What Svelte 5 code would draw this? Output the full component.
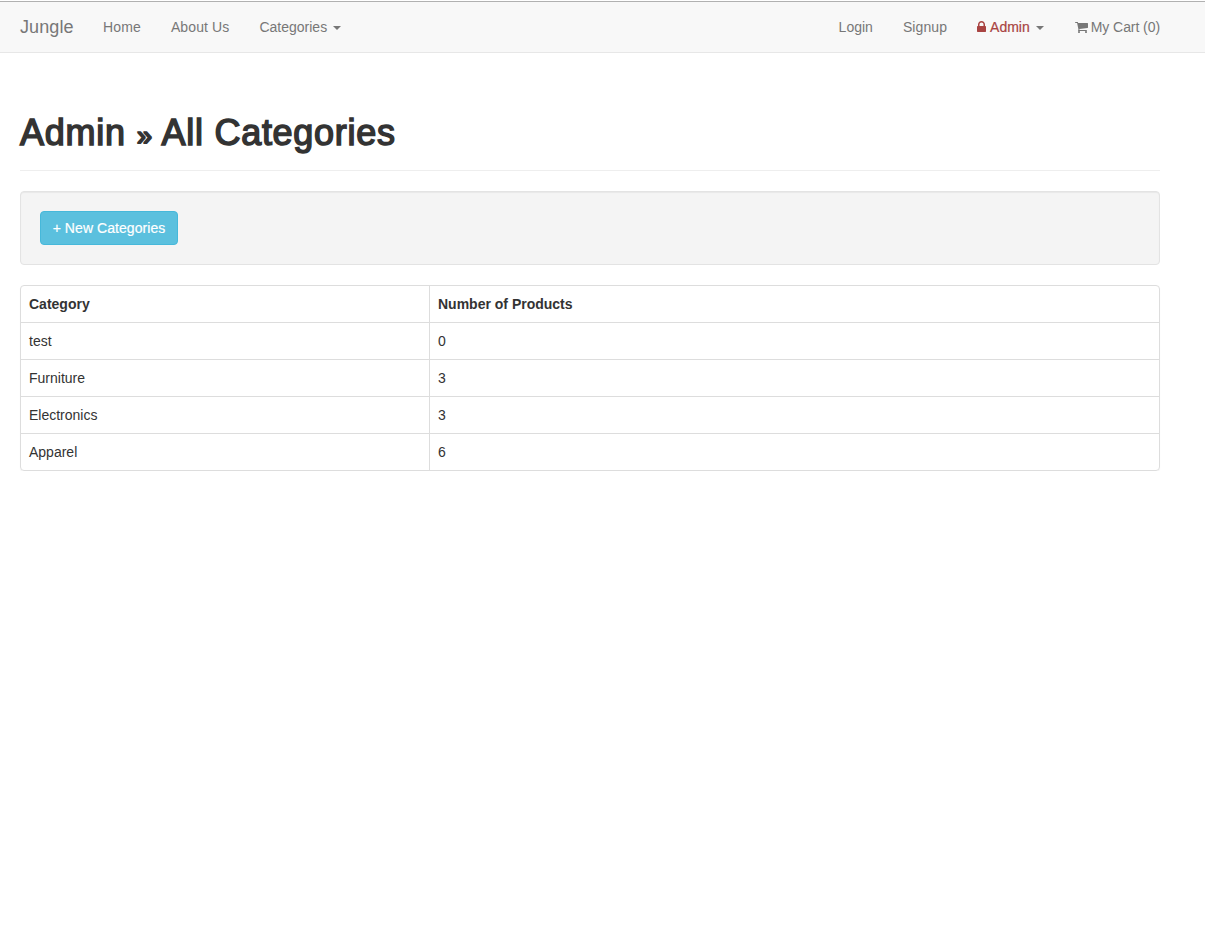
<script>
  const categories = [
    { name: 'test', count: 0 },
    { name: 'Furniture', count: 3 },
    { name: 'Electronics', count: 3 },
    { name: 'Apparel', count: 6 }
  ];
</script>

<nav>
  <div class="group">
    <a class="brand" href="#home">Jungle</a>
    <a class="home" href="#home">Home</a>
    <a class="about" href="#about">About Us</a>
    <a class="cats" href="#categories">Categories <span class="caret"></span></a>
  </div>
  <div class="group">
    <a class="login" href="#login">Login</a>
    <a class="signup" href="#signup">Signup</a>
    <a class="adminlink" href="#admin"><span class="danger"><svg class="lock" viewBox="0 0 1152 1792"><path fill="currentColor" d="M320 768h512v-192q0-106-75-181t-181-75-181 75-75 181v192zm832 96v576q0 40-28 68t-68 28h-960q-40 0-68-28t-28-68v-576q0-40 28-68t68-28h32v-192q0-184 132-316t316-132 316 132 132 316v192h32q40 0 68 28t28 68z" /></svg><span>Admin</span></span><span class="caret"></span></a>
    <a class="cart" href="#cart"><svg class="cart-icon" viewBox="64 0 1664 1792"><path fill="currentColor" d="M704 1536q0 52-38 90t-90 38-90-38-38-90 38-90 90-38 90 38 38 90zm896 0q0 52-38 90t-90 38-90-38-38-90 38-90 90-38 90 38 38 90zm128-1088v512q0 24-16.5 42.5t-40.5 21.5l-1044 122q13 60 13 70 0 16-24 64h920q26 0 45 19t19 45-19 45-45 19h-1024q-26 0-45-19t-19-45q0-11 8-31.500t16-36 21.500-40 15.500-29.500l-177-823h-204q-26 0-45-19t-19-45 19-45 45-19h256q16 0 28.500 6.500t19.500 15.500 13 24.500 8 26 5.500 29.500 4.500 26h1201q26 0 45 19t19 45z" /></svg><span>My Cart (0)</span></a>
  </div>
</nav>

<main>
  <header><h1>Admin <span class="sep">»</span> All Categories</h1></header>
  <div class="well"><a class="btn" href="#new">+ New Categories</a></div>
  <div class="panel">
    <table>
      <thead>
        <tr><th class="first">Category</th><th>Number of Products</th></tr>
      </thead>
      <tbody>
        {#each categories as c}
          <tr><td>{c.name}</td><td>{c.count}</td></tr>
        {/each}
      </tbody>
    </table>
  </div>
</main>

<style>
  :global(body) {
    margin: 0;
    background: #fff;
    color: #333;
    font: 14px/20px "Liberation Sans", Arial, sans-serif;
  }
  a { text-decoration: none; }
  nav {
    box-sizing: border-box;
    height: 52px;
    margin-top: 1px;
    padding: 0 45px 0 20px;
    display: flex;
    justify-content: space-between;
    background: #f8f8f8;
    border-top: 1px solid #b1b1b1;
    border-bottom: 1px solid #e7e7e7;
  }
  .group { display: flex; gap: 30px; }
  nav a {
    display: flex;
    align-items: center;
    height: 20px;
    padding: 15px 0;
    color: #777;
    white-space: nowrap;
  }
  .brand { font-size: 18px; letter-spacing: 0.1px; margin-right: -0.6px; }
  .home, .about { letter-spacing: 0.12px; }
  .signup { letter-spacing: 0.1px; }
  .adminlink { margin-right: 1px; }
  .caret {
    margin-left: 6px;
    border-top: 4px solid #777;
    border-left: 4px solid transparent;
    border-right: 4px solid transparent;
    position: relative;
    top: 1px;
  }
  .danger { display: flex; align-items: center; color: #a94442; }
  .danger span { -webkit-text-stroke: 0.2px #a94442; }
  svg { height: 14px; display: block; }
  .lock { width: 9px; margin-right: 4px; }
  .cart-icon { width: 13px; margin-right: 3px; }
  .cart span { letter-spacing: -0.07px; }
  main { padding: 58px 45px 0 20px; }
  header {
    border-bottom: 1px solid #eee;
    padding-bottom: 16px;
    margin-bottom: 20px;
  }
  h1 {
    margin: 0;
    font-size: 36px;
    line-height: 43px;
    height: 43px;
    font-weight: 400;
    letter-spacing: 0.72px;
    -webkit-text-stroke: 1.5px #333;
  }
  .sep { font-size: 27px; letter-spacing: 0; margin: 0 0.9px 0 0.5px; -webkit-text-stroke-width: 1.8px; }
  .well {
    box-sizing: border-box;
    height: 74px;
    padding: 19px;
    margin-bottom: 20px;
    background: #f4f4f4;
    border: 1px solid #e3e3e3;
    border-radius: 4px;
    box-shadow: inset 0 1px 1px rgba(0, 0, 0, 0.05);
  }
  .btn {
    box-sizing: border-box;
    display: flex;
    justify-content: center;
    width: 138px;
    height: 34px;
    padding: 6px 0;
    color: #fff;
    background: #5bc0de;
    border: 1px solid #46b8da;
    border-radius: 4px;
    white-space: nowrap;
    letter-spacing: 0.06px;
    -webkit-text-stroke: 0.2px #fff;
  }
  .panel {
    border: 1px solid #ddd;
    border-radius: 4px;
    box-shadow: 0 1px 1px rgba(0, 0, 0, 0.05);
  }
  table { width: 100%; border-collapse: separate; border-spacing: 0; table-layout: fixed; }
  th, td { height: 20px; padding: 8px; text-align: left; border-bottom: 1px solid #ddd; }
  th:first-child, td:first-child { border-right: 1px solid #ddd; }
  .first { width: 392px; }
  tr:last-child td { border-bottom: 0; }
</style>
